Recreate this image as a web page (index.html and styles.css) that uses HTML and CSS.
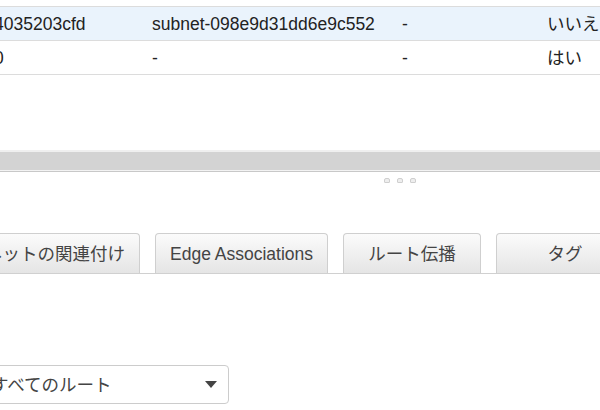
FILE: index.html
```html
<!DOCTYPE html>
<html lang="ja">
<head>
<meta charset="utf-8">
<link rel="stylesheet" href="styles.css">
</head>
<body>
<div class="page">
  <table class="grid">
    <tr class="row selected">
      <td class="c1">4035203cfd</td>
      <td class="c2">subnet-098e9d31dd6e9c552</td>
      <td class="c3">-</td>
      <td class="c4">いいえ</td>
    </tr>
    <tr class="row">
      <td class="c1">0</td>
      <td class="c2">-</td>
      <td class="c3">-</td>
      <td class="c4">はい</td>
    </tr>
  </table>

  <div class="splitter">
    <div class="band"></div>
    <div class="grip"><span></span><span></span><span></span></div>
  </div>

  <div class="tabs">
    <div class="tab t1">サブネットの関連付け</div>
    <div class="tab">Edge Associations</div>
    <div class="tab">ルート伝播</div>
    <div class="tab">タグ</div>
  </div>

  <div class="filter">
    <div class="select">
      <span class="select-text">すべてのルート</span>
      <svg class="caret" width="12" height="7" viewBox="0 0 12 7"><path d="M0 0H12L6 7Z" fill="#444"/></svg>
    </div>
  </div>
</div>
</body>
</html>
```

FILE: styles.css
```css
html, body {
  margin: 0;
  padding: 0;
  background: #fff;
}
body {
  width: 600px;
  height: 410px;
  overflow: hidden;
  font-family: "Liberation Sans", "Noto Sans CJK JP", sans-serif;
  font-size: 17.5px;
  color: #222;
}
.page {
  width: 600px;
  overflow: hidden;
}
.grid {
  margin-top: 6px;
  margin-left: -6px;
  border-collapse: collapse;
  table-layout: fixed;
  width: 700px;
}
.row td {
  height: 33px;
  padding: 0;
  border-top: 1px solid #dcdcdc;
  border-bottom: 1px solid #dcdcdc;
  white-space: nowrap;
  overflow: hidden;
  line-height: 20px;
  vertical-align: middle;
}
.row.selected td {
  background: #eaf3fc;
}
.c1 { width: 158px; }
.c2 { width: 250px; }
.c3 { width: 145px; }
.c4 { width: 147px; }

.splitter {
  margin-top: 75px;
}
.band {
  height: 18px;
  background: #d3d3d3;
  border-top: 2px solid #efefef;
  border-bottom: 1px solid #f3f3f3;
  box-shadow: 0 1px 0 #c8c8c8;
}
.grip {
  display: flex;
  gap: 7px;
  margin-top: 7px;
  margin-left: 384px;
  height: 5px;
}
.grip span {
  width: 4px;
  height: 3px;
  border: 1px solid #cfcfcf;
  background: #eee;
  border-radius: 2px 2px 1px 1px;
}

.tabs {
  display: flex;
  gap: 15px;
  margin-top: 50px;
  margin-left: -65px;
  width: 800px;
  border-bottom: 1px solid #d0d0d0;
  height: 40px;
}
.tab {
  box-sizing: border-box;
  height: 40px;
  min-width: 138px;
  padding: 0 14px;
  border: 1px solid #cfcfcf;
  border-bottom: none;
  border-radius: 4px 4px 0 0;
  background: linear-gradient(#fbfbfb, #e5e5e5);
  color: #444;
  display: flex;
  align-items: center;
  justify-content: center;
  white-space: nowrap;
  line-height: 20px;
}
.t1 {
  width: 205px;
}

.filter {
  margin-top: 91px;
  margin-left: -22px;
}
.select {
  box-sizing: border-box;
  width: 251px;
  height: 39px;
  border: 1px solid #cccccc;
  border-radius: 4px;
  background: #fff;
  display: flex;
  align-items: center;
  padding-left: 12px;
  padding-right: 11px;
  color: #444;
  line-height: 20px;
}
.select-text {
  flex: 1;
  white-space: nowrap;
}
.caret {
  display: block;
}
```
